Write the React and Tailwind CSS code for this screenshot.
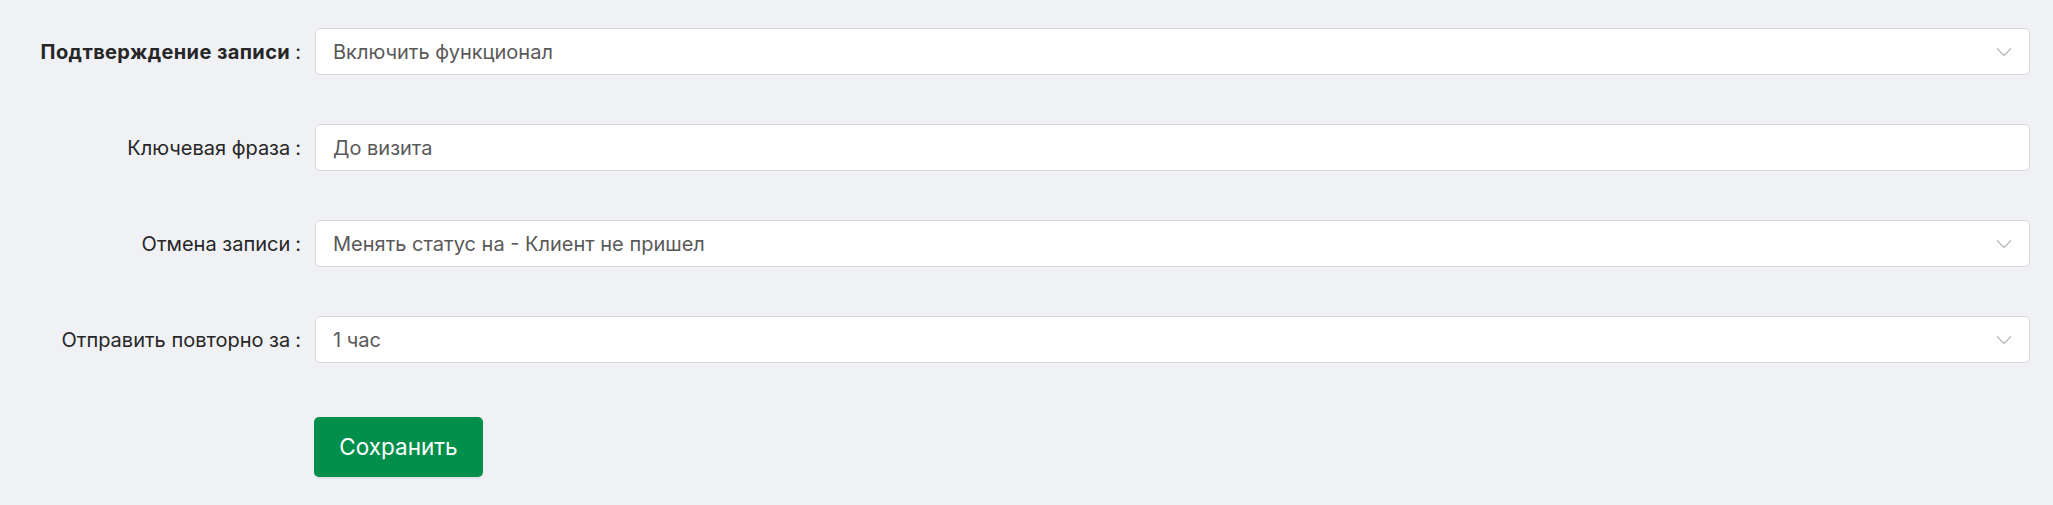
import React from 'react';

const rows = [
  { label: 'Подтверждение записи', value: 'Включить функционал', select: true, bold: true },
  { label: 'Ключевая фраза', value: 'До визита', select: false },
  { label: 'Отмена записи', value: 'Менять статус на - Клиент не пришел', select: true },
  { label: 'Отправить повторно за', value: '1 час', select: true },
];

function Chevron() {
  return (
    <svg width="16" height="10" viewBox="0 0 16 10" fill="none" className="shrink-0">
      <path d="M1 1.5 L8 8.5 L15 1.5" stroke="#bfbfbf" strokeWidth="1.4" />
    </svg>
  );
}

function Field({ label, value, select, bold }) {
  return (
    <div className="flex items-center h-[47px]">
      <div className="w-[315px] shrink-0 flex items-center justify-end">
        <span className={`text-[20px] text-[#262626] ${bold ? 'font-bold tracking-[0.4px]' : 'font-normal'}`}>{label}</span>
        <span className="text-[20px] text-[#262626] ml-[5px] mr-[14px]">:</span>
      </div>
      <div className="flex-1 h-full bg-white border border-[#d9d9d9] rounded-[5px] flex items-center justify-between pl-[17px] pr-[17px]">
        <span className="text-[20px] text-[#595959]">{value}</span>
        {select && <Chevron />}
      </div>
    </div>
  );
}

export default function App() {
  return (
    <div className="w-[2053px] h-[505px] bg-[#f0f1f5] pt-[28px] pr-[23px] font-['Inter',sans-serif]">
      <div className="flex flex-col gap-[49px]">
        {rows.map((r, i) => (
          <Field key={i} {...r} />
        ))}
      </div>
      <div className="pl-[314px] mt-[54px]">
        <button
          type="button"
          className="w-[169px] h-[60px] bg-[#018f4b] text-white text-[22.5px] rounded-[5px] shadow-[0_2px_0_rgba(0,0,0,0.05)]"
        >
          Сохранить
        </button>
      </div>
    </div>
  );
}
